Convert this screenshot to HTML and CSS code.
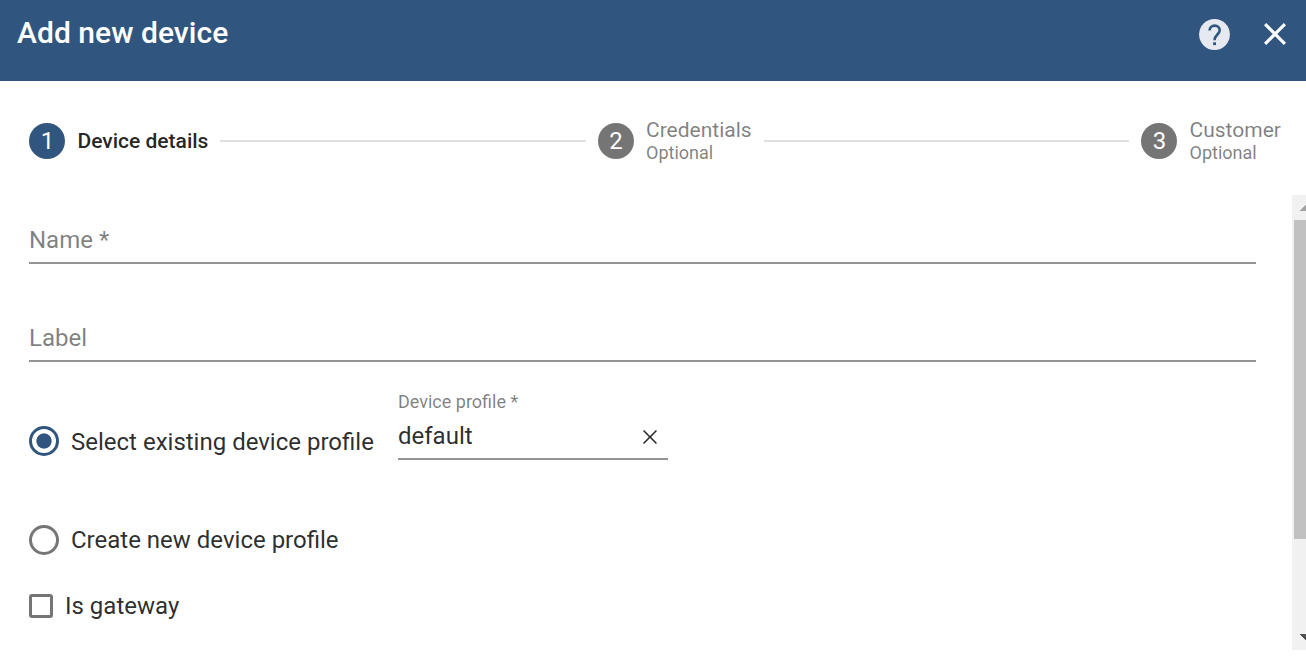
FILE: index.html
```html
<!DOCTYPE html>
<html lang="en">
<head>
<meta charset="utf-8">
<title>Add new device</title>
<link rel="stylesheet" href="styles.css">
</head>
<body>
<header class="toolbar">
  <h1 class="title">Add new device</h1>
  <svg class="help" viewBox="0 0 31 31"><circle cx="15.500" cy="15.500" r="15.400" fill="currentColor"/><path fill="none" stroke="#305680" stroke-width="2.600" d="M10.600 11.500C10.600 8.400 12.800 6.600 15.700 6.600S20.700 8.500 20.700 11.300C20.700 15.500 15.500 15.700 15.500 21.300"/><path fill="#305680" d="M14.100 23.300h2.900v2.800h-2.900z"/></svg>
  <svg class="close" viewBox="5 5 14 14"><path fill="currentColor" d="M19 6.410L17.590 5 12 10.590 6.410 5 5 6.410 10.590 12 5 17.590 6.410 19 12 13.410 17.590 19 19 17.590 13.410 12z"/></svg>
</header>
<nav class="stepper">
  <div class="step active"><span class="num">1</span><div class="step-label"><span class="step-name details">Device details</span></div></div>
  <span class="line"></span>
  <div class="step"><span class="num">2</span><div class="step-label second"><span class="step-name">Credentials</span><span class="optional">Optional</span></div></div>
  <span class="line"></span>
  <div class="step"><span class="num">3</span><div class="step-label third"><span class="step-name">Customer</span><span class="optional">Optional</span></div></div>
</nav>
<main class="content">
  <form class="form">
    <div class="field">Name *</div>
    <div class="field">Label</div>
    <div class="profile-row">
      <label class="choice"><span class="radio checked"></span><span class="text">Select existing device profile</span></label>
      <div class="profile">
        <span class="caption">Device profile *</span>
        <div class="value"><span>default</span>
          <svg class="clear" viewBox="5 5 14 14"><path fill="currentColor" d="M19 6.100L17.900 5 12 10.900 6.100 5 5 6.100 10.900 12 5 17.900 6.100 19 12 13.100 17.900 19 19 17.900 13.100 12z"/></svg>
        </div>
      </div>
    </div>
    <label class="choice create"><span class="radio"></span><span class="text">Create new device profile</span></label>
    <label class="choice gateway"><span class="box"></span><span class="text">Is gateway</span></label>
  </form>
  <div class="scrollbar">
    <svg class="arrow" viewBox="0 0 14 25"><path fill="#a3a3a3" d="M7 16L13 10H14V16z"/></svg>
    <div class="thumb"></div>
    <svg class="arrow down" viewBox="0 0 14 25"><path fill="#505050" d="M7 9L13 15H14V9z"/></svg>
  </div>
</main>
</body>
</html>
```
FILE: styles.css
```css
* { box-sizing: border-box; }
body { margin: 0; width: 1306px; height: 662px; overflow: hidden; background: #fff; font-family: Roboto, sans-serif; color: rgba(0,0,0,.84); }
.toolbar { display: flex; height: 81px; padding: 0 20px 0 17px; background: #305680; color: #fff; }
.title { flex: 1; margin: 15px 0 0; font-size: 30px; line-height: 36px; font-weight: 500; letter-spacing: .04px; }
.help { width: 31px; height: 31px; margin: 18.500px 34px 0 0; color: #e6eaf0; }
.close { width: 22px; height: 22px; margin-top: 23px; }
.stepper { display: flex; align-items: center; height: 114px; padding: 6px 25px 0 29px; gap: 12px; }
.step { display: flex; align-items: center; gap: 12px; flex: none; }
.num { width: 36px; height: 36px; padding-left: 1px; border-radius: 50%; background: #757575; color: #fff; font-size: 24px; line-height: 37px; text-align: center; }
.active .num { background: #305680; }
.step-label { display: flex; flex-direction: column; color: rgba(0,0,0,.51); white-space: nowrap; }
.active .step-label { width: 131px; color: rgba(0,0,0,.87); }
.second { width: 106px; padding: 0 0 2px .5px; }
.third { width: 92px; padding: 0 0 2px .5px; }
.step-name { font-size: 21px; line-height: 24px; }
.details { font-weight: 500; padding-left: .5px; }
.optional { font-size: 18px; line-height: 21px; }
.line { flex: 1; height: 2px; background: #e0e0e0; margin-bottom: 1px; }
.content { display: flex; height: 455px; }
.form { width: 1292px; padding: 0 36px 0 29px; }
.field { height: 69px; padding-top: 30px; border-bottom: 2px solid #949494; font-size: 24px; line-height: 30px; color: rgba(0,0,0,.51); }
.field + .field { margin-top: 29px; }
.profile-row { display: flex; height: 98px; }
.choice { display: flex; align-items: center; gap: 12px; height: 30px; font-size: 24px; line-height: 30px; white-space: nowrap; }
.profile-row .choice { width: 345px; margin-top: 64px; }
.profile-row .text { padding-top: 2px; }
.radio { width: 30px; height: 30px; border: 3px solid #757575; border-radius: 50%; flex: none; }
.checked { border-color: #305680; background: radial-gradient(circle, #305680 7.2px, transparent 8px); }
.profile { width: 270px; margin: 28px 0 0 24px; }
.caption { display: block; font-size: 18px; line-height: 24px; color: rgba(0,0,0,.51); }
.value { display: flex; justify-content: space-between; height: 46px; padding: 7px 11.500px 0 0; border-bottom: 2px solid #949494; font-size: 24px; line-height: 30px; }
.clear { width: 14px; height: 14px; margin-top: 9px; }
.create { margin-top: 65px; }
.gateway { margin-top: 36px; }
.box { width: 24px; height: 24px; border: 3px solid #757575; border-radius: 3px; }
.scrollbar { width: 14px; background: #f1f1f1; display: flex; flex-direction: column; }
.arrow { width: 14px; height: 25px; shape-rendering: crispEdges; }
.thumb { height: 319px; margin-left: 2px; background: #c1c1c1; }
.down { margin-top: auto; }
```
